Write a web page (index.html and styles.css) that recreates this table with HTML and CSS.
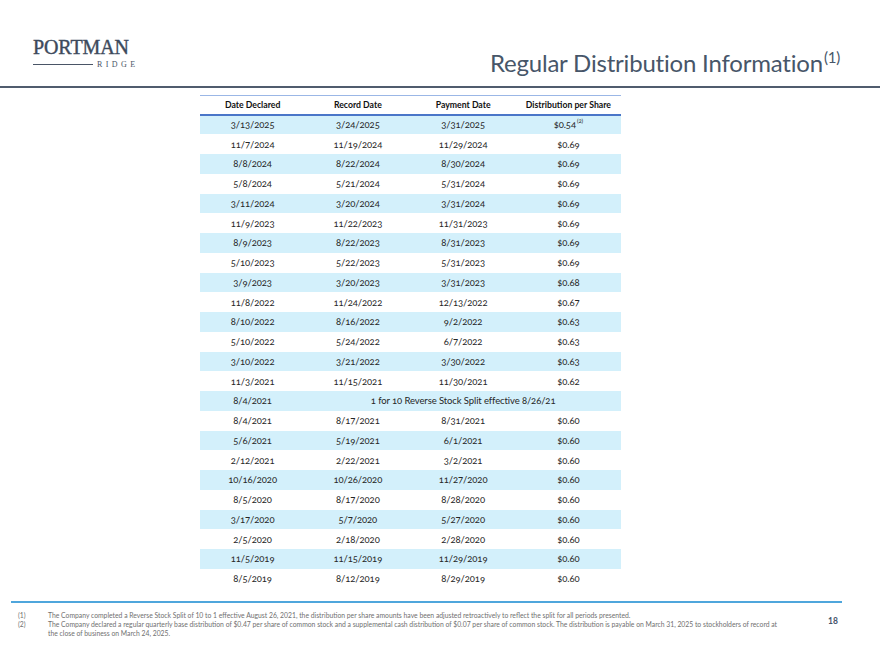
FILE: index.html
```html
<!DOCTYPE html>
<html>
<head>
<meta charset="utf-8">
<link rel="stylesheet" href="styles.css">
</head>
<body>
<div class="slide">
  <header class="top">
    <div class="logo">
      <div class="logo-name">PORTMAN</div>
      <div class="logo-sub"><span class="logo-line"></span><span class="logo-ridge">RIDGE</span></div>
    </div>
    <h1 class="title">Regular Distribution Information<sup>(1)</sup></h1>
  </header>
  <div class="top-rule"></div>
  <main class="table-area">
    <table class="dist">
      <thead>
        <tr><th>Date Declared</th><th>Record Date</th><th>Payment Date</th><th>Distribution per Share</th></tr>
      </thead>
      <tbody>
        <tr><td>3/13/2025</td><td>3/24/2025</td><td>3/31/2025</td><td>$0.54<sup>(2)</sup></td></tr>
        <tr><td>11/7/2024</td><td>11/19/2024</td><td>11/29/2024</td><td>$0.69</td></tr>
        <tr><td>8/8/2024</td><td>8/22/2024</td><td>8/30/2024</td><td>$0.69</td></tr>
        <tr><td>5/8/2024</td><td>5/21/2024</td><td>5/31/2024</td><td>$0.69</td></tr>
        <tr><td>3/11/2024</td><td>3/20/2024</td><td>3/31/2024</td><td>$0.69</td></tr>
        <tr><td>11/9/2023</td><td>11/22/2023</td><td>11/31/2023</td><td>$0.69</td></tr>
        <tr><td>8/9/2023</td><td>8/22/2023</td><td>8/31/2023</td><td>$0.69</td></tr>
        <tr><td>5/10/2023</td><td>5/22/2023</td><td>5/31/2023</td><td>$0.69</td></tr>
        <tr><td>3/9/2023</td><td>3/20/2023</td><td>3/31/2023</td><td>$0.68</td></tr>
        <tr><td>11/8/2022</td><td>11/24/2022</td><td>12/13/2022</td><td>$0.67</td></tr>
        <tr><td>8/10/2022</td><td>8/16/2022</td><td>9/2/2022</td><td>$0.63</td></tr>
        <tr><td>5/10/2022</td><td>5/24/2022</td><td>6/7/2022</td><td>$0.63</td></tr>
        <tr><td>3/10/2022</td><td>3/21/2022</td><td>3/30/2022</td><td>$0.63</td></tr>
        <tr><td>11/3/2021</td><td>11/15/2021</td><td>11/30/2021</td><td>$0.62</td></tr>
        <tr><td>8/4/2021</td><td colspan="3">1 for 10 Reverse Stock Split effective 8/26/21</td></tr>
        <tr><td>8/4/2021</td><td>8/17/2021</td><td>8/31/2021</td><td>$0.60</td></tr>
        <tr><td>5/6/2021</td><td>5/19/2021</td><td>6/1/2021</td><td>$0.60</td></tr>
        <tr><td>2/12/2021</td><td>2/22/2021</td><td>3/2/2021</td><td>$0.60</td></tr>
        <tr><td>10/16/2020</td><td>10/26/2020</td><td>11/27/2020</td><td>$0.60</td></tr>
        <tr><td>8/5/2020</td><td>8/17/2020</td><td>8/28/2020</td><td>$0.60</td></tr>
        <tr><td>3/17/2020</td><td>5/7/2020</td><td>5/27/2020</td><td>$0.60</td></tr>
        <tr><td>2/5/2020</td><td>2/18/2020</td><td>2/28/2020</td><td>$0.60</td></tr>
        <tr><td>11/5/2019</td><td>11/15/2019</td><td>11/29/2019</td><td>$0.60</td></tr>
        <tr><td>8/5/2019</td><td>8/12/2019</td><td>8/29/2019</td><td>$0.60</td></tr>
      </tbody>
    </table>
  </main>
  <footer class="foot">
    <div class="notes">
      <div class="note"><span class="num">(1)</span><span class="txt">The Company completed a Reverse Stock Split of 10 to 1 effective August 26, 2021, the distribution per share amounts have been adjusted retroactively to reflect the split for all periods presented.</span></div>
      <div class="note"><span class="num">(2)</span><span class="txt">The Company declared a regular quarterly base distribution of $0.47 per share of common stock and a supplemental cash distribution of $0.07 per share of common stock. The distribution is payable on March 31, 2025 to stockholders of record at the close of business on March 24, 2025.</span></div>
    </div>
    <div class="page">18</div>
  </footer>
</div>
</body>
</html>
```

FILE: styles.css
```css
* { box-sizing: border-box; }
html, body { margin: 0; padding: 0; background: #fff; }
.slide {
  width: 880px;
  height: 660px;
  display: flex;
  flex-direction: column;
  font-family: Lato, "Open Sans", sans-serif;
  color: #222;
}
.top {
  height: 86px;
  display: flex;
  justify-content: space-between;
  align-items: flex-start;
  padding: 0 40px 0 33px;
}
.logo { margin-top: 37px; width: 102px; }
.logo-name {
  font-family: "Liberation Serif", serif;
  font-size: 20px;
  line-height: 20px;
  color: #3d4a5c;
  -webkit-text-stroke: 0.4px #3d4a5c;
  letter-spacing: -0.1px;
}
.logo-sub { display: flex; align-items: center; margin-top: 3px; }
.logo-line { display: block; width: 60px; height: 1px; background: #4a5566; flex: none; }
.logo-ridge {
  font-family: "Liberation Serif", serif;
  font-size: 8px;
  line-height: 9px;
  letter-spacing: 3.4px;
  color: #4a5566;
  margin-left: 4px;
}
.title {
  margin: 48px 0 0 0;
  font-family: Lato, "Open Sans", sans-serif;
  font-weight: normal;
  font-size: 24px;
  line-height: 30px;
  color: #475669;
  letter-spacing: -0.2px;
}
.title sup { font-size: 15px; vertical-align: 9px; line-height: 0; margin-left: 1px; }
.top-rule { height: 2px; background: #505c6e; flex: none; }
.table-area { flex: 1; padding: 7px 0 0 200px; }
.dist {
  width: 421px;
  table-layout: fixed;
  border-collapse: collapse;
  font-variant-numeric: oldstyle-nums;
}
.dist thead tr { border-top: 1px solid #9bb7e6; border-bottom: 2px solid #4a76c8; }
.dist th {
  height: 19px;
  font-size: 8.7px;
  font-weight: bold;
  color: #111;
  text-align: center;
  padding: 0;
  white-space: nowrap;
}
.dist td {
  height: 19.75px;
  font-size: 9.5px;
  color: #262626;
  text-align: center;
  padding: 0;
  white-space: nowrap;
  letter-spacing: -0.1px;
}
.dist td sup { font-size: 6px; vertical-align: 5px; line-height: 0; margin-left: 1px; }
.dist tbody tr:nth-child(odd) { background: #d3f0fb; }
.foot {
  height: 59px;
  margin: 0 38px 0 11px;
  border-top: 2px solid #4fa6dc;
  display: flex;
  padding-top: 8px;
}
.notes { flex: 1; padding-left: 7px; }
.note { display: flex; font-size: 6.8px; line-height: 9px; color: #707070; }
.note .num { width: 30px; flex: none; }
.note .txt { width: 736px; }
.page {
  font-size: 8.5px;
  font-weight: bold;
  color: #44546a;
  padding-top: 5px;
  width: 14px;
}
```
